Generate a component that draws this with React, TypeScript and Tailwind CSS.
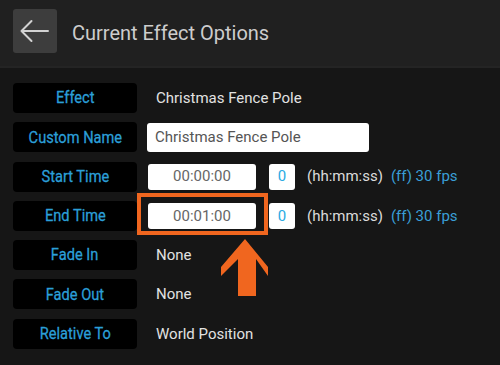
const labelCls =
  "flex h-[30px] w-[124px] shrink-0 items-center justify-center rounded-[4px] bg-black text-[17px] text-[#2b9fd8]";

function Label({ children }: { children: string }) {
  return (
    <div className={labelCls}>
      <span className="inline-block scale-x-[0.86] whitespace-nowrap [-webkit-text-stroke:0.3px_#2b9fd8]">
        {children}
      </span>
    </div>
  );
}

function TimeRow({ label, value, highlight }: { label: string; value: string; highlight?: boolean }) {
  return (
    <div className="flex h-[30px] items-center">
      <Label>{label}</Label>
      <div className="relative ml-[11px]">
        <div className="flex h-[26px] w-[108px] items-center justify-center rounded-[3px] bg-white text-[15px] text-[#666]">
          {value}
        </div>
        {highlight && (
          <>
            <div className="absolute -left-[11px] -top-[10px] h-[42px] w-[131px] border-4 border-[#f0661f]" />
            <svg
              className="absolute left-[73px] top-[36px]"
              width="47"
              height="57"
              viewBox="0 0 47 57"
            >
              <polygon
                points="24,0 0,28 0,37 17,20 17,57 35,57 35,20 47,37 47,28"
                fill="#f0661f"
              />
            </svg>
          </>
        )}
      </div>
      <div className="ml-[13px] flex h-[26px] w-[26px] items-center justify-center rounded-[3px] bg-white text-[15px] text-[#29aae2]">
        0
      </div>
      <span className="ml-[12px] text-[15px] text-[#dcdcdc]">(hh:mm:ss)</span>
      <span className="ml-[8px] text-[15px] text-[#3a9fd6]">(ff) 30 fps</span>
    </div>
  );
}

function TextRow({ label, value }: { label: string; value: string }) {
  return (
    <div className="flex h-[30px] items-center">
      <Label>{label}</Label>
      <span className="ml-[19px] text-[15px] text-[#e2e2e2]">{value}</span>
    </div>
  );
}

export default function App() {
  return (
    <div
      className="h-[365px] w-[500px] overflow-hidden bg-[#161616]"
      style={{ fontFamily: "Roboto, 'Liberation Sans', sans-serif" }}
    >
      <div className="flex h-[68px] items-start border-b-2 border-[#242424] bg-[#202020] pl-[13px] pt-[9px]">
        <button className="flex h-[44px] w-[44px] items-center justify-center rounded-[3px] bg-[#3d3d3d]">
          <svg width="44" height="44" viewBox="0 0 44 44" fill="none">
            <path
              d="M35 22H8.5M18.5 12L8.5 22L18.5 32"
              stroke="#d2d2d2"
              strokeWidth="2"
              strokeLinecap="round"
              strokeLinejoin="round"
            />
          </svg>
        </button>
        <h1 className="ml-[15px] mt-[9px] text-[20px] text-[#cdcdcd]">Current Effect Options</h1>
      </div>

      <div className="flex flex-col gap-[9.3px] px-[13px] pt-[15px]">
        <TextRow label="Effect" value="Christmas Fence Pole" />
        <div className="flex h-[30px] items-center">
          <Label>Custom Name</Label>
          <div className="ml-[10px] flex h-[29px] w-[222px] items-center rounded-[3px] bg-white pl-[8px] text-[15px] text-[#555]">
            Christmas Fence Pole
          </div>
        </div>
        <TimeRow label="Start Time" value="00:00:00" />
        <TimeRow label="End Time" value="00:01:00" highlight />
        <TextRow label="Fade In" value="None" />
        <TextRow label="Fade Out" value="None" />
        <TextRow label="Relative To" value="World Position" />
      </div>
    </div>
  );
}
